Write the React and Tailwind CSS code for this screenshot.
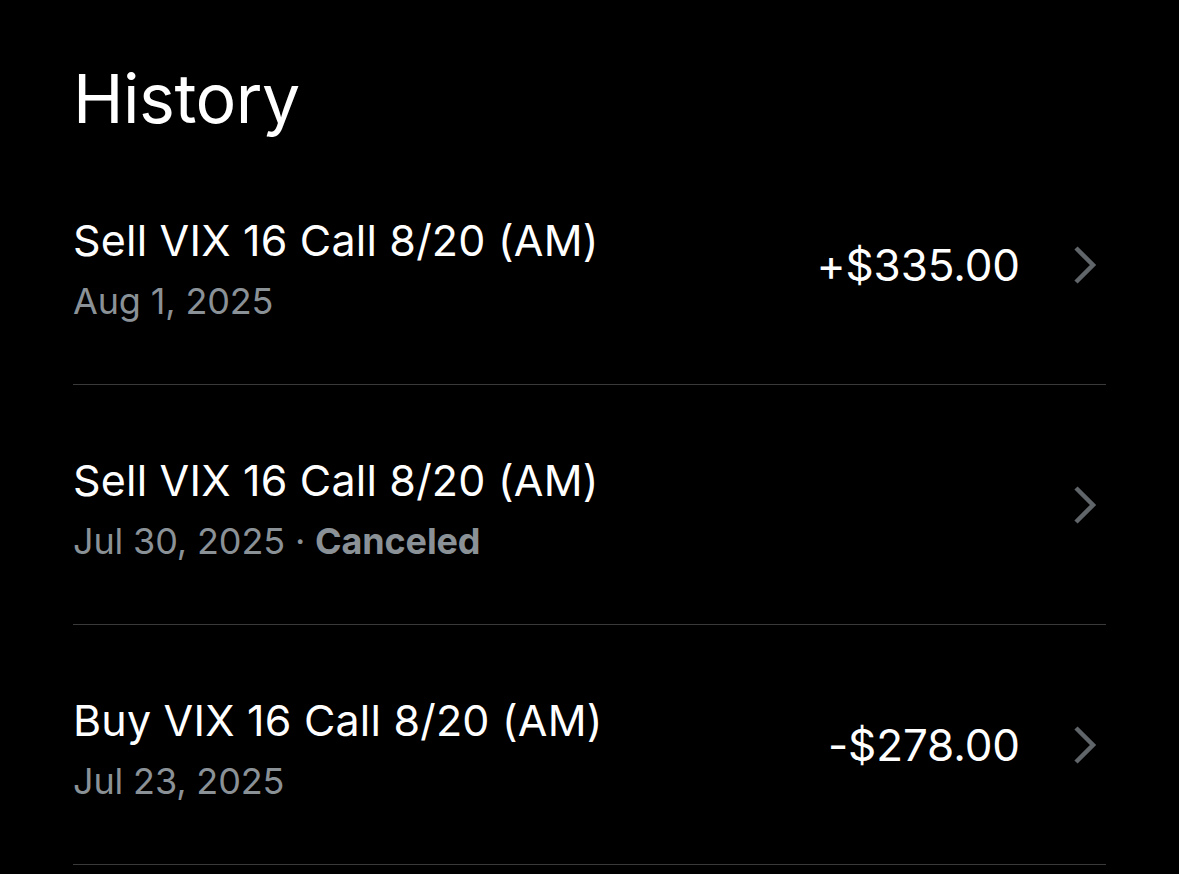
import React from "react";

const rows = [
  { title: "Sell VIX 16 Call 8/20 (AM)", date: "Aug 1, 2025", amount: "+$335.00" },
  { title: "Sell VIX 16 Call 8/20 (AM)", date: "Jul 30, 2025", status: "Canceled" },
  { title: "Buy VIX 16 Call 8/20 (AM)", date: "Jul 23, 2025", amount: "-$278.00" },
];

const Chevron = () => (
  <svg width="26" height="40" viewBox="0 0 26 40" fill="none">
    <path d="M4 3 L21 20 L4 37" stroke="#5f6569" strokeWidth="4.5" strokeLinecap="butt" strokeLinejoin="miter" />
  </svg>
);

const App = () => {
  return (
    <div
      className="bg-black text-white w-[1179px] h-[874px] overflow-hidden px-[73px]"
      style={{ fontFamily: "Inter, 'Liberation Sans', sans-serif" }}
    >
      <h1 className="text-[68px] font-normal leading-none pt-[64px] pb-[13px] tracking-[-0.5px]">History</h1>

      <ul>
        {rows.map((row, idx) => (
          <li
            key={idx}
            className="h-[240px] border-b border-[#3a3a3a] flex items-center justify-between"
          >
            <div className="flex flex-col gap-[14px] pt-[8px]">
              <p className="text-[43px] leading-[50px] tracking-[0.2px]">{row.title}</p>
              <p className="text-[36px] leading-[44px] text-[#8a9197] tracking-[-0.15px]">
                {row.date}
                {row.status && (
                  <>
                    {" · "}
                    <span className="font-bold">{row.status}</span>
                  </>
                )}
              </p>
            </div>
            <div className="flex items-center gap-[52px] mr-[8px]">
              {row.amount && <span className="text-[44px] tracking-[-0.1px]">{row.amount}</span>}
              <Chevron />
            </div>
          </li>
        ))}
      </ul>
    </div>
  );
};

export default App;
